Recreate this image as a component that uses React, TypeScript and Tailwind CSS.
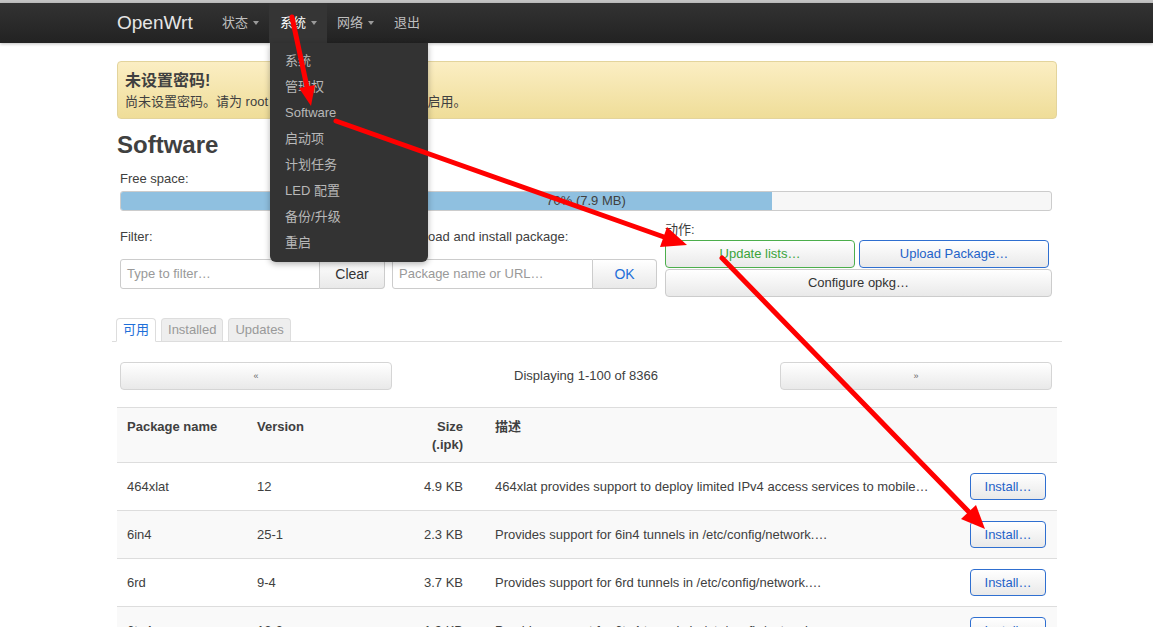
import React from "react";

type Pkg = { name: string; version: string; size: string; desc: string };

const packages: Pkg[] = [
  {
    name: "464xlat",
    version: "12",
    size: "4.9 KB",
    desc: "464xlat provides support to deploy limited IPv4 access services to mobile…",
  },
  { name: "6in4", version: "25-1", size: "2.3 KB", desc: "Provides support for 6in4 tunnels in /etc/config/network.…" },
  { name: "6rd", version: "9-4", size: "3.7 KB", desc: "Provides support for 6rd tunnels in /etc/config/network.…" },
  { name: "6to4", version: "12-3", size: "1.9 KB", desc: "Provides support for 6to4 tunnels in /etc/config/network.…" },
];

const menu = ["系统", "管理权", "Software", "启动项", "计划任务", "LED 配置", "备份/升级", "重启"];

const btn =
  "flex items-center justify-center rounded-[4px] border bg-gradient-to-b from-white to-[#e9e9e9] shadow-[inset_0_1px_0_rgba(255,255,255,0.3)]";

function Caret() {
  return (
    <span className="ml-[5px] inline-block h-0 w-0 border-x-[3px] border-t-[4px] border-x-transparent border-t-[#9a9a9a]" />
  );
}

function NavBar() {
  return (
    <header className="h-10 bg-gradient-to-b from-[#333333] to-[#222222] shadow-[0_1px_3px_rgba(0,0,0,0.25)]">
      <div className="ml-[117px] flex h-full items-stretch">
        <span className="flex w-[94px] items-center text-[19px] text-[#e6e6e6]">OpenWrt</span>
        <ul className="flex text-[13px]">
          <li className="flex items-center pl-[11px] pr-[10px] text-[#bfbfbf]">
            状态
            <Caret />
          </li>
          <li className="relative flex items-center bg-[#353535] pl-[11px] pr-[10px] text-white">
            系统
            <Caret />
            <div className="absolute left-[1px] top-full z-10 w-[158px] rounded-b-[6px] bg-[#333333] pb-[6px] pt-[5px] shadow-[0_2px_6px_rgba(0,0,0,0.3)]">
              {menu.map((m) => (
                <div key={m} className="px-[15px] py-[4px] leading-[18px] text-[#b8b8b8]">
                  {m}
                </div>
              ))}
            </div>
          </li>
          <li className="flex items-center pl-[10px] pr-[10px] text-[#bfbfbf]">
            网络
            <Caret />
          </li>
          <li className="flex items-center pl-[10px] pr-[10px] text-[#bfbfbf]">退出</li>
        </ul>
      </div>
    </header>
  );
}

function Arrows() {
  return (
    <svg
      className="pointer-events-none absolute left-0 top-0 z-20"
      width="1153"
      height="627"
      viewBox="0 0 1153 627"
    >
      <g stroke="#ff0000" strokeWidth="5" strokeLinecap="round" fill="none">
        <line x1="292" y1="17" x2="307" y2="87" />
        <line x1="336" y1="121" x2="664" y2="237" />
        <line x1="722" y1="258" x2="969" y2="512" />
      </g>
      <g fill="#ff0000">
        <polygon points="311,106 299,88 315,85" />
        <polygon points="687,245 660,247 667,227" />
        <polygon points="985,529 961,519 976,505" />
      </g>
    </svg>
  );
}

export default function App() {
  return (
    <div className="relative min-h-screen overflow-hidden bg-white font-['Liberation_Sans','Noto_Sans_CJK_SC',sans-serif] text-[13px] leading-[18px] text-[#404040]">
      <div className="h-[3px] bg-[#c4c4c4]" />
      <NavBar />

      <main className="ml-[117px] w-[940px] pt-[18px]">
        <div className="rounded-[4px] border border-[#e3d49c] bg-gradient-to-b from-[#fbeec3] to-[#efdd98] px-[7px] py-[7px]">
          <h4 className="text-[16px] font-bold leading-[24px]">未设置密码!</h4>
          <p>尚未设置密码。请为 root 用户设置密码以保护主机并启用。</p>
        </div>

        <h2 className="mt-[8px] text-[24px] font-bold leading-[36px]">Software</h2>

        <div className="ml-[3px] w-[932px]">
          <div className="mt-[7px]">Free space:</div>
          <div className="relative mt-[3px] h-[20px] overflow-hidden rounded-[3px] border border-[#cccccc] bg-[#f7f7f7]">
            <div className="h-full w-[70%] bg-[#8fc0e0]" />
            <div className="absolute inset-0 flex items-center justify-center">70% (7.9 MB)</div>
          </div>

          <div className="mt-[10px] flex items-start">
            <div className="w-[265px]">
              <div className="mt-[7px]">Filter:</div>
              <div className="mt-[13px] flex h-[30px]">
                <div className="flex flex-1 items-center rounded-l-[3px] border border-[#cccccc] px-[6px] text-[#999999]">
                  Type to filter…
                </div>
                <div className={`${btn} w-[65px] rounded-l-none border-[#cccccc] border-l-0 text-[14px] text-[#333333]`}>
                  Clear
                </div>
              </div>
            </div>

            <div className="ml-[7px] w-[265px]">
              <div className="mt-[7px]">Download and install package:</div>
              <div className="mt-[13px] flex h-[30px]">
                <div className="flex flex-1 items-center rounded-l-[3px] border border-[#cccccc] px-[6px] text-[#999999]">
                  Package name or URL…
                </div>
                <div className={`${btn} w-[64px] rounded-l-none border-[#cccccc] border-l-0 text-[14px] text-[#1e6fd9]`}>
                  OK
                </div>
              </div>
            </div>

            <div className="ml-[8px] w-[387px]">
              <div className="leading-[18px]">动作:</div>
              <div className="mt-[1px] flex gap-[4px]">
                <div className={`${btn} h-[28px] w-[190px] border-[#4cae4c] text-[#3aa43a]`}>Update lists…</div>
                <div className={`${btn} h-[28px] w-[190px] border-[#2f6fd0] text-[#1f63c9]`}>Upload Package…</div>
              </div>
              <div className={`${btn} mt-[1px] h-[28px] border-[#cccccc] text-[#333333]`}>Configure opkg…</div>
            </div>
          </div>
        </div>

        <ul className="-mx-[5px] mt-[21px] flex gap-[5px] border-b border-[#dddddd] pl-[4px]">
          <li className="-mb-px flex h-[24px] items-center rounded-t-[4px] border border-[#dddddd] border-b-white bg-white px-[6px] text-[#1e6fd9]">
            可用
          </li>
          <li className="flex h-[23px] items-center rounded-t-[4px] border border-b-0 border-[#dddddd] bg-[#eeeeee] px-[6px] text-[#999999]">
            Installed
          </li>
          <li className="flex h-[23px] items-center rounded-t-[4px] border border-b-0 border-[#dddddd] bg-[#eeeeee] px-[6px] text-[#999999]">
            Updates
          </li>
        </ul>

        <div className="ml-[3px] mt-[20px] flex h-[28px] w-[932px] items-center">
          <div className={`${btn} h-full w-[272px] border-[#d5d5d5] text-[9px] text-[#666666]`}>«</div>
          <div className="flex-1 text-center">Displaying 1-100 of 8366</div>
          <div className={`${btn} h-full w-[272px] border-[#d5d5d5] text-[9px] text-[#666666]`}>»</div>
        </div>

        <div className="mt-[17px] border-t border-[#dddddd]">
          <div className="grid h-[54px] grid-cols-[130px_150px_88px_475px_97px] items-start bg-[#f9f9f9] pt-[10px] font-bold">
            <div className="pl-[10px]">Package name</div>
            <div className="pl-[10px]">Version</div>
            <div className="pr-[22px] text-right">
              Size
              <br />
              (.ipk)
            </div>
            <div className="pl-[10px]">描述</div>
            <div />
          </div>
          {packages.map((p, i) => (
            <div
              key={p.name}
              className={`grid h-[48px] grid-cols-[130px_150px_88px_475px_97px] items-center border-t border-[#dddddd] ${
                i % 2 === 1 ? "bg-[#f9f9f9]" : "bg-white"
              }`}
            >
              <div className="pl-[10px]">{p.name}</div>
              <div className="pl-[10px]">{p.version}</div>
              <div className="pr-[22px] text-right">{p.size}</div>
              <div className="truncate pl-[10px]">{p.desc}</div>
              <div className="pl-[10px]">
                <div className={`${btn} h-[27px] w-[76px] border-[#2f6fd0] text-[#1f63c9]`}>Install…</div>
              </div>
            </div>
          ))}
        </div>
      </main>

      <Arrows />
    </div>
  );
}
